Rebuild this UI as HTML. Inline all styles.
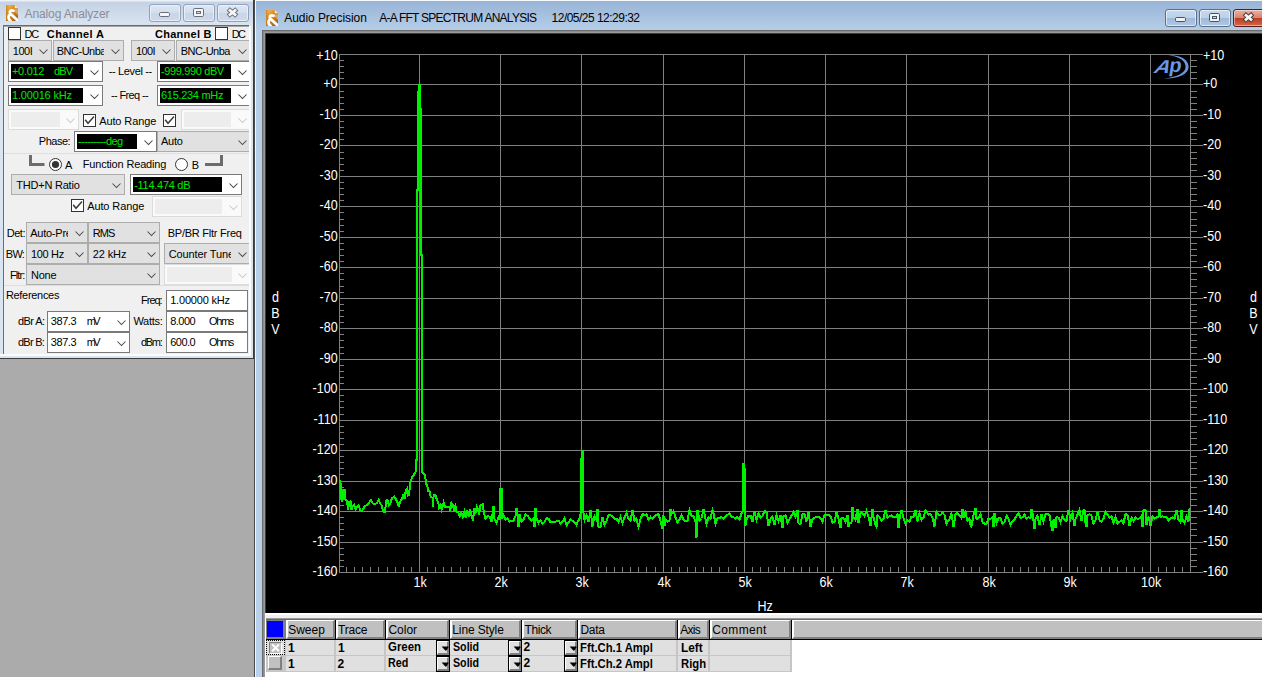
<!DOCTYPE html>
<html lang="en"><head><meta charset="utf-8"><title>Audio Precision</title>
<style>
html,body{margin:0;padding:0;}
body{width:1262px;height:677px;overflow:hidden;background:#ababab;position:relative;font-family:"Liberation Sans",sans-serif;}
div{position:absolute;box-sizing:border-box;white-space:pre;}
.t{font-size:11px;line-height:13px;color:#000;transform:scaleY(1.06);transform-origin:0 10px;}
.tb{font-size:11px;line-height:13px;color:#000;font-weight:bold;transform:scaleY(1.06);transform-origin:0 10px;}
.g{font-size:11px;line-height:13px;color:#00e800;transform:scaleY(1.06);transform-origin:0 10px;}
.cb{background:#e1e1e1;border:1px solid #adadad;}
.cbd{background:#fafafa;border:1px solid #dcdcdc;}
.wb{background:#fff;border:1px solid #7a7a7a;}
.blk{background:#000;}
.chk{background:#fff;border:1px solid #333;}
.hd{background:#c0c0c0;border-top:1px solid #fff;border-left:2px solid #fff;border-right:2px solid #808080;border-bottom:2px solid #808080;}
svg{position:absolute;overflow:visible;}
</style></head>
<body>
<div style="left:254px;top:0px;width:1px;height:677px;background:#4a4a4a;"></div>
<div style="left:255px;top:0px;width:1010px;height:677px;background:#f4f7fb;"></div>
<div style="left:256px;top:1px;width:1010px;height:680px;background:linear-gradient(#98b4d6,#b6cee8 30px,#b9d1ea);"></div>
<svg width="12" height="16" viewBox="0 0 12 16" style="left:266px;top:10px;overflow:hidden"><defs><linearGradient id="ig266" x1="0" y1="0" x2="0.9" y2="1"><stop offset="0" stop-color="#f8c55c"/><stop offset=".35" stop-color="#e0962e"/><stop offset="1" stop-color="#a55a10"/></linearGradient><linearGradient id="ih266" x1="0" y1="0" x2="1" y2="0"><stop offset="0" stop-color="#b8680f"/><stop offset="1" stop-color="#b8680f" stop-opacity="0"/></linearGradient></defs><path d="M0 0 H8.8 L12 3.2 V16 H0 Z" fill="url(#ig266)"/><path d="M0 0 H3 V16 H0 Z" fill="url(#ih266)" opacity=".6"/><path d="M6.5 4.5 H12 V10 Z" fill="#f4cf8e" opacity=".55"/><path d="M8.8 0 L12 3.2 H9.4 Q8.8 3.2 8.8 2.4 Z" fill="#fbeed2"/><path d="M7.4 5.8 C5 4.8 3.2 6.2 4.2 8.4 L11.6 15.4 M4.2 9.2 C1.8 10.6 2 14 4.4 15.6" fill="none" stroke="#fff" stroke-width="2.8" stroke-linecap="round"/></svg>
<div class="t" style="left:284.2px;top:11px;letter-spacing:-0.05px;font-size:12px;line-height:14px;color:#000;">Audio Precision</div>
<div class="t" style="left:379.2px;top:11px;letter-spacing:-0.74px;font-size:12px;line-height:14px;color:#000;">A-A FFT SPECTRUM ANALYSIS</div>
<div class="t" style="left:551.6px;top:11px;letter-spacing:-0.52px;font-size:12px;line-height:14px;color:#000;">12/05/25 12:29:32</div>
<div style="left:1165px;top:9px;width:32px;height:18px;border:1px solid #5d6f88;border-radius:3px;background:linear-gradient(#c5d8ee,#bcd1ea 48%,#9fb9d9 52%,#b0c8e4);box-shadow:inset 0 0 0 1px rgba(255,255,255,.6);"></div>
<svg width="32" height="18" style="left:1165px;top:8.5px"><rect x="10.5" y="8.5" width="10" height="4" rx="1.2" fill="#f2f2f2" stroke="#4a5363"/></svg>
<div style="left:1199px;top:9px;width:32px;height:18px;border:1px solid #5d6f88;border-radius:3px;background:linear-gradient(#c5d8ee,#bcd1ea 48%,#9fb9d9 52%,#b0c8e4);box-shadow:inset 0 0 0 1px rgba(255,255,255,.6);"></div>
<svg width="32" height="18" style="left:1199px;top:8.5px"><rect x="10.5" y="4.5" width="10" height="8" rx="1.2" fill="#f2f2f2" stroke="#4a5363"/><rect x="13.5" y="7.5" width="4" height="2" fill="#cfdbea" stroke="#4a5363"/></svg>
<div style="left:1233px;top:9px;width:40px;height:18px;border:1px solid #5b1a1a;border-radius:3px;background:linear-gradient(#eab0a2,#dc8270 48%,#c13a1f 52%,#cf6a4a);box-shadow:inset 0 0 0 1px rgba(255,255,255,.45);"></div>
<svg width="14" height="12" style="left:1242px;top:11px"><path d="M4 4.3 L9 8.5 M9 4.3 L4 8.5" stroke="#4a3c3c" stroke-width="4.6" stroke-linecap="square"/><path d="M4 4.3 L9 8.5 M9 4.3 L4 8.5" stroke="#f6f6f6" stroke-width="2.7" stroke-linecap="square"/></svg>
<div style="left:262px;top:30px;width:1004px;height:650px;background:#6a6a6a;"></div>
<div style="left:263px;top:31px;width:1004px;height:650px;background:#8c8c8c;"></div>
<div style="left:264px;top:32px;width:1004px;height:650px;background:#9a9a9a;"></div>
<div style="left:265px;top:33px;width:1004px;height:650px;background:#3c3c3c;"></div>
<div style="left:266px;top:34px;width:1000px;height:579px;background:#000;"></div>
<div style="left:265px;top:613px;width:1001px;height:70px;background:#fff;"></div>
<div style="left:265px;top:615px;width:1001px;height:3px;background:#f0f0f0;"></div>
<svg width="1262" height="677" viewBox="0 0 1262 677" style="left:0;top:0" font-family="Liberation Sans, sans-serif" font-size="13"><g stroke="#808080" stroke-width="1" shape-rendering="crispEdges" fill="none"><path d="M339 54.5 H1203"/><path d="M339 84.5 H1203"/><path d="M339 115.5 H1203"/><path d="M339 145.5 H1203"/><path d="M339 176.5 H1203"/><path d="M339 206.5 H1203"/><path d="M339 237.5 H1203"/><path d="M339 267.5 H1203"/><path d="M339 298.5 H1203"/><path d="M339 328.5 H1203"/><path d="M339 359.5 H1203"/><path d="M339 389.5 H1203"/><path d="M339 420.5 H1203"/><path d="M339 450.5 H1203"/><path d="M339 481.5 H1203"/><path d="M339 511.5 H1203"/><path d="M339 542.5 H1203"/><path d="M339 572.5 H1203"/><path d="M339.5 54 V573"/><path d="M1190.5 54 V573"/><path d="M419.5 54 V573"/><path d="M500.5 54 V573"/><path d="M581.5 54 V573"/><path d="M663.5 54 V573"/><path d="M744.5 54 V573"/><path d="M825.5 54 V573"/><path d="M906.5 54 V573"/><path d="M988.5 54 V573"/><path d="M1069.5 54 V573"/><path d="M1150.5 54 V573"/><path d="M339 60.5 h5 M1190 60.5 h7 M339 66.5 h5 M1190 66.5 h7 M339 72.5 h5 M1190 72.5 h7 M339 78.5 h5 M1190 78.5 h7 M339 91.5 h5 M1190 91.5 h7 M339 97.5 h5 M1190 97.5 h7 M339 103.5 h5 M1190 103.5 h7 M339 109.5 h5 M1190 109.5 h7 M339 121.5 h5 M1190 121.5 h7 M339 127.5 h5 M1190 127.5 h7 M339 133.5 h5 M1190 133.5 h7 M339 139.5 h5 M1190 139.5 h7 M339 152.5 h5 M1190 152.5 h7 M339 158.5 h5 M1190 158.5 h7 M339 164.5 h5 M1190 164.5 h7 M339 170.5 h5 M1190 170.5 h7 M339 182.5 h5 M1190 182.5 h7 M339 188.5 h5 M1190 188.5 h7 M339 194.5 h5 M1190 194.5 h7 M339 200.5 h5 M1190 200.5 h7 M339 212.5 h5 M1190 212.5 h7 M339 219.5 h5 M1190 219.5 h7 M339 225.5 h5 M1190 225.5 h7 M339 231.5 h5 M1190 231.5 h7 M339 243.5 h5 M1190 243.5 h7 M339 249.5 h5 M1190 249.5 h7 M339 255.5 h5 M1190 255.5 h7 M339 261.5 h5 M1190 261.5 h7 M339 273.5 h5 M1190 273.5 h7 M339 279.5 h5 M1190 279.5 h7 M339 286.5 h5 M1190 286.5 h7 M339 292.5 h5 M1190 292.5 h7 M339 304.5 h5 M1190 304.5 h7 M339 310.5 h5 M1190 310.5 h7 M339 316.5 h5 M1190 316.5 h7 M339 322.5 h5 M1190 322.5 h7 M339 334.5 h5 M1190 334.5 h7 M339 340.5 h5 M1190 340.5 h7 M339 347.5 h5 M1190 347.5 h7 M339 353.5 h5 M1190 353.5 h7 M339 365.5 h5 M1190 365.5 h7 M339 371.5 h5 M1190 371.5 h7 M339 377.5 h5 M1190 377.5 h7 M339 383.5 h5 M1190 383.5 h7 M339 395.5 h5 M1190 395.5 h7 M339 401.5 h5 M1190 401.5 h7 M339 407.5 h5 M1190 407.5 h7 M339 414.5 h5 M1190 414.5 h7 M339 426.5 h5 M1190 426.5 h7 M339 432.5 h5 M1190 432.5 h7 M339 438.5 h5 M1190 438.5 h7 M339 444.5 h5 M1190 444.5 h7 M339 456.5 h5 M1190 456.5 h7 M339 462.5 h5 M1190 462.5 h7 M339 468.5 h5 M1190 468.5 h7 M339 474.5 h5 M1190 474.5 h7 M339 487.5 h5 M1190 487.5 h7 M339 493.5 h5 M1190 493.5 h7 M339 499.5 h5 M1190 499.5 h7 M339 505.5 h5 M1190 505.5 h7 M339 517.5 h5 M1190 517.5 h7 M339 523.5 h5 M1190 523.5 h7 M339 529.5 h5 M1190 529.5 h7 M339 535.5 h5 M1190 535.5 h7 M339 548.5 h5 M1190 548.5 h7 M339 554.5 h5 M1190 554.5 h7 M339 560.5 h5 M1190 560.5 h7 M339 566.5 h5 M1190 566.5 h7"/><path d="M346.5 567 v6 M354.5 567 v6 M362.5 567 v6 M370.5 567 v6 M378.5 567 v6 M387.5 567 v6 M395.5 567 v6 M403.5 567 v6 M411.5 567 v6 M427.5 567 v6 M435.5 567 v6 M443.5 567 v6 M451.5 567 v6 M460.5 567 v6 M468.5 567 v6 M476.5 567 v6 M484.5 567 v6 M492.5 567 v6 M508.5 567 v6 M516.5 567 v6 M525.5 567 v6 M533.5 567 v6 M541.5 567 v6 M549.5 567 v6 M557.5 567 v6 M565.5 567 v6 M573.5 567 v6 M590.5 567 v6 M598.5 567 v6 M606.5 567 v6 M614.5 567 v6 M622.5 567 v6 M630.5 567 v6 M638.5 567 v6 M646.5 567 v6 M655.5 567 v6 M671.5 567 v6 M679.5 567 v6 M687.5 567 v6 M695.5 567 v6 M703.5 567 v6 M711.5 567 v6 M719.5 567 v6 M728.5 567 v6 M736.5 567 v6 M752.5 567 v6 M760.5 567 v6 M768.5 567 v6 M776.5 567 v6 M784.5 567 v6 M793.5 567 v6 M801.5 567 v6 M809.5 567 v6 M817.5 567 v6 M833.5 567 v6 M841.5 567 v6 M849.5 567 v6 M858.5 567 v6 M866.5 567 v6 M874.5 567 v6 M882.5 567 v6 M890.5 567 v6 M898.5 567 v6 M914.5 567 v6 M923.5 567 v6 M931.5 567 v6 M939.5 567 v6 M947.5 567 v6 M955.5 567 v6 M963.5 567 v6 M971.5 567 v6 M979.5 567 v6 M996.5 567 v6 M1004.5 567 v6 M1012.5 567 v6 M1020.5 567 v6 M1028.5 567 v6 M1036.5 567 v6 M1044.5 567 v6 M1052.5 567 v6 M1061.5 567 v6 M1077.5 567 v6 M1085.5 567 v6 M1093.5 567 v6 M1101.5 567 v6 M1109.5 567 v6 M1117.5 567 v6 M1126.5 567 v6 M1134.5 567 v6 M1142.5 567 v6 M1158.5 567 v6 M1166.5 567 v6 M1174.5 567 v6 M1182.5 567 v6"/></g><g fill="#fff"><text transform="translate(337.6,60) scale(.965,1.08)" text-anchor="end">+10</text><text transform="translate(1203,60) scale(.965,1.08)">+10</text><text transform="translate(337.6,88) scale(.965,1.08)" text-anchor="end">+0</text><text transform="translate(1203,88) scale(.965,1.08)">+0</text><text transform="translate(337.6,119) scale(.965,1.08)" text-anchor="end">-10</text><text transform="translate(1203,119) scale(.965,1.08)">-10</text><text transform="translate(337.6,149) scale(.965,1.08)" text-anchor="end">-20</text><text transform="translate(1203,149) scale(.965,1.08)">-20</text><text transform="translate(337.6,180) scale(.965,1.08)" text-anchor="end">-30</text><text transform="translate(1203,180) scale(.965,1.08)">-30</text><text transform="translate(337.6,210) scale(.965,1.08)" text-anchor="end">-40</text><text transform="translate(1203,210) scale(.965,1.08)">-40</text><text transform="translate(337.6,241) scale(.965,1.08)" text-anchor="end">-50</text><text transform="translate(1203,241) scale(.965,1.08)">-50</text><text transform="translate(337.6,271) scale(.965,1.08)" text-anchor="end">-60</text><text transform="translate(1203,271) scale(.965,1.08)">-60</text><text transform="translate(337.6,302) scale(.965,1.08)" text-anchor="end">-70</text><text transform="translate(1203,302) scale(.965,1.08)">-70</text><text transform="translate(337.6,332) scale(.965,1.08)" text-anchor="end">-80</text><text transform="translate(1203,332) scale(.965,1.08)">-80</text><text transform="translate(337.6,363) scale(.965,1.08)" text-anchor="end">-90</text><text transform="translate(1203,363) scale(.965,1.08)">-90</text><text transform="translate(337.6,393) scale(.965,1.08)" text-anchor="end">-100</text><text transform="translate(1203,393) scale(.965,1.08)">-100</text><text transform="translate(337.6,424) scale(.965,1.08)" text-anchor="end">-110</text><text transform="translate(1203,424) scale(.965,1.08)">-110</text><text transform="translate(337.6,454) scale(.965,1.08)" text-anchor="end">-120</text><text transform="translate(1203,454) scale(.965,1.08)">-120</text><text transform="translate(337.6,485) scale(.965,1.08)" text-anchor="end">-130</text><text transform="translate(1203,485) scale(.965,1.08)">-130</text><text transform="translate(337.6,515) scale(.965,1.08)" text-anchor="end">-140</text><text transform="translate(1203,515) scale(.965,1.08)">-140</text><text transform="translate(337.6,546) scale(.965,1.08)" text-anchor="end">-150</text><text transform="translate(1203,546) scale(.965,1.08)">-150</text><text transform="translate(337.6,576) scale(.965,1.08)" text-anchor="end">-160</text><text transform="translate(1203,576) scale(.965,1.08)">-160</text><text transform="translate(420.1,587) scale(.965,1.08)" text-anchor="middle">1k</text><text transform="translate(501.1,587) scale(.965,1.08)" text-anchor="middle">2k</text><text transform="translate(582.1,587) scale(.965,1.08)" text-anchor="middle">3k</text><text transform="translate(664.1,587) scale(.965,1.08)" text-anchor="middle">4k</text><text transform="translate(745.1,587) scale(.965,1.08)" text-anchor="middle">5k</text><text transform="translate(826.1,587) scale(.965,1.08)" text-anchor="middle">6k</text><text transform="translate(907.1,587) scale(.965,1.08)" text-anchor="middle">7k</text><text transform="translate(989.1,587) scale(.965,1.08)" text-anchor="middle">8k</text><text transform="translate(1070.1,587) scale(.965,1.08)" text-anchor="middle">9k</text><text transform="translate(1151.1,587) scale(.965,1.08)" text-anchor="middle">10k</text><text transform="translate(765.2,611) scale(.965,1.08)" text-anchor="middle">Hz</text><text transform="translate(275.5,302) scale(.965,1.08)" text-anchor="middle">d</text><text transform="translate(1253.5,302) scale(.965,1.08)" text-anchor="middle">d</text><text transform="translate(275.5,318) scale(.965,1.08)" text-anchor="middle">B</text><text transform="translate(1253.5,318) scale(.965,1.08)" text-anchor="middle">B</text><text transform="translate(275.5,334) scale(.965,1.08)" text-anchor="middle">V</text><text transform="translate(1253.5,334) scale(.965,1.08)" text-anchor="middle">V</text></g><g fill="#6a98e2" font-weight="bold"><text transform="translate(1152.4,72.9) skewX(-27) scale(1.16,1)" font-size="18.7">A</text><text transform="translate(1168.6,72.3) skewX(-9)" font-size="20">p</text><path d="M1168 55 C1182 55 1188.6 60 1188.6 67 C1188.6 74 1178 79.2 1164 78.4 C1176 77.6 1185.6 73 1185.6 67 C1185.6 61 1180 56.6 1168 55 Z"/></g><path d="M339.87 479.9 L340.91 484.3 L341.65 502 L342.68 488.7 L343.57 499.1 L344.6 488.7 L345.34 499.1 L346.82 500.6 L348.29 509.4 L349.03 502 L350.51 501.3 L351.54 510.2 L352.73 506.5 L354.2 505 L355.68 509.4 L357.16 507.2 L358.63 505.7 L360.41 510.2 L361.88 511.2 L364.54 506.5 L366.76 505 L368.97 502.8 L370.89 499.8 L372.67 503.5 L374.88 504.3 L377.1 502.8 L378.57 499.8 L380.05 503.5 L381.53 505 L383.01 511.6 L385.22 512.1 L385.96 500.6 L387.44 499.8 L388.91 505 L390.39 503.5 L391.87 498.3 L394.08 496.6 L395.86 499.1 L397.78 502.8 L398.81 507.2 L399.99 502 L402.21 498.3 L403.24 493.9 L404.42 499.1 L405.9 490.2 L406.94 488.7 L407.67 495.4 L409.15 494.7 L410.04 482.8 L411.07 479.9 L412.55 476.2 L414.03 474.7 L415.5 471.8 L415.6 472 L415.6 460 L417 460 L417 190 L418 190 L418 92 L419 92 L419 85 L420 85 L420 109 L421 109 L421 255 L422 255 L422 472 L424.36 474 L425.4 476.9 L425.84 483.6 L427.32 485.8 L428.06 491 L429.83 491.7 L430.72 496.9 L432.49 497.6 L432.93 506.5 L433.67 494.7 L435.44 495.4 L436.92 499.8 L438.4 503.5 L439.14 507.9 L440.61 505 L441.65 509.4 L443.57 502.8 L445.04 507.2 L447.26 506.5 L449.48 507.2 L450.21 510.9 L451.4 502.8 L452.87 505 L453.91 509.4 L455.38 505.7 L456.42 511.6 L458.34 512.4 L459.82 516.1 L461.29 513.1 L462.77 516.8 L464.25 511.6 L465.72 517.5 L467.2 510.2 L468.68 516.8 L470.16 509.4 L471.63 516.1 L473.11 520.5 L474.14 507.9 L475.32 513.9 L476.8 506.5 L478.28 509.4 L479.02 514.6 L480.49 505.7 L482.71 504.3 L484.19 513.9 L485.5 518.4 L487.5 516 L489.5 516.6 L491.5 521.8 L493.5 506 L494.5 519.3 L496.5 522.8 L498.5 517.6 L499.5 519.7 L499.5 519 L499.5 489 L501.5 489 L501.5 491 L502 491 L502 519 L503.5 515.1 L505.5 519.9 L507.5 518.5 L509.5 521.6 L511.5 520.5 L513.5 520.5 L515.5 515.8 L516.5 508 L517.5 516.1 L518.5 527 L519.5 514.2 L521.5 521.4 L523.5 520 L525.5 514.6 L527.5 515.8 L529.5 518.5 L531.5 520.6 L533.5 518.6 L534.5 527 L535.5 508 L536.5 518.1 L538.5 523 L540.5 520.5 L542.5 523.7 L544.5 522 L546.5 518.4 L548.5 518.6 L550.5 522.3 L552.5 522 L554.5 521.7 L556.5 521.5 L558.5 520.7 L560.5 523.5 L562.5 521.6 L564.5 518.2 L566.5 525.2 L568.5 522.7 L570.5 519.2 L572.5 520.8 L574.5 522 L576.5 525 L577.5 522.2 L579.5 518.7 L580.5 514.4 L581 512 L581 459 L581.5 459 L581.5 451 L582.5 451 L582.5 493 L583.4 493 L583.4 512 L584.5 520.2 L586.5 515.6 L588.5 521.7 L590.5 510 L592.5 526.5 L594.5 516.4 L596.5 520.1 L597.5 509 L598.5 526.5 L600.5 526.5 L602.5 517.2 L604.5 525 L606.5 521 L608.5 515 L610.5 515.2 L612.5 516.6 L614.5 519 L616.5 518.7 L618.5 521.9 L620.5 517.1 L622.5 523.1 L624.5 517.6 L626.5 513 L628.5 518.8 L630.5 520.9 L632.5 510 L634.5 520.7 L636.5 518.8 L638.5 526.5 L640.5 519 L642.5 513.9 L644.5 514.9 L646.5 514.5 L648.5 519.6 L650.5 516.9 L652.5 519 L654.5 516.5 L656.5 514.9 L658.5 514 L660.5 520.7 L662.5 529 L663.5 515.5 L664.5 526 L665.5 519.9 L667.5 521.9 L669.5 520.7 L670.5 509 L671.5 513.9 L673.5 510.9 L675.5 517.5 L677.5 522.3 L679.5 519.4 L681.5 515.2 L683.5 519.5 L685.5 521.3 L687.5 520.8 L689.5 510 L691.5 515.9 L693.5 516 L695.5 521.9 L696.5 538 L697.5 510 L699.5 520.6 L701.5 518.5 L703.5 509 L704.5 513.9 L706.5 523.5 L708.5 517.4 L710.5 518.6 L712.5 510 L713.5 513 L715.5 523.8 L717.5 518.1 L719.5 517.9 L721.5 517 L723.5 518.7 L725.5 516.1 L727.5 514.8 L729.5 513.6 L731.5 516.5 L733.5 517.3 L735.5 518.4 L737.5 517 L739.5 519.6 L741.5 513.2 L742.5 512.3 L742.6 512 L742.6 464 L744 464 L744 469 L745.2 469 L745.2 526 L746.5 519.9 L748.5 515.5 L750.5 515.5 L752.5 521.8 L754.5 511.1 L756.5 520 L758.5 513.2 L760.5 517.4 L762.5 516.2 L764.5 510.9 L766.5 512.3 L768.5 525.9 L770.5 518.9 L772.5 516.7 L774.5 525.1 L776.5 515.2 L778.5 520.9 L780.5 515.1 L782.5 528 L783.5 516.1 L785.5 515.4 L787.5 522.9 L789.5 519.2 L791.5 515.5 L793.5 512.2 L795.5 516.9 L797.5 510 L798.5 523.4 L800.5 524.3 L802.5 513.8 L804.5 514.1 L806.5 521.4 L808.5 512 L810.5 526.5 L812.5 519.1 L814.5 517.9 L816.5 516.8 L818.5 517.1 L820.5 517.9 L822.5 521.5 L824.5 514.8 L826.5 515.4 L828.5 515.1 L830.5 516 L832.5 522.6 L834.5 521.8 L836.5 511.8 L838.5 518.9 L840.5 528 L841.5 518.1 L843.5 518 L845.5 521.5 L847.5 515.2 L848.5 527 L849.5 522.7 L851.5 522.7 L852.5 507 L853.5 517.2 L855.5 520.1 L857.5 509 L858.5 522.8 L860.5 513.2 L862.5 513.5 L864.5 516.1 L866.5 511 L868.5 516.8 L870.5 525.9 L872.5 509 L873.5 517.4 L875.5 525 L876.5 527 L877.5 515.3 L879.5 516.9 L881.5 520.9 L883.5 518.5 L885.5 510 L887.5 517.6 L889.5 516.2 L891.5 515.3 L893.5 517.4 L895.5 517.3 L897.5 514.4 L898.5 528 L899.5 518.9 L901.5 510 L903.5 517.8 L905.5 524.2 L907.5 520.1 L909.5 521.8 L911.5 516.6 L913.5 516.7 L915.5 510 L917.5 521.3 L919.5 513.5 L921.5 520 L923.5 517.6 L925.5 510 L926.5 510.9 L928.5 514.7 L930.5 514.1 L932.5 517.9 L934.5 526.5 L936.5 511.5 L938.5 514.9 L940.5 515.1 L942.5 512.8 L944.5 515 L946.5 524 L947.5 521.7 L949.5 519.1 L951.5 513.7 L953.5 526.5 L955.5 514.6 L957.5 512.9 L959.5 515.6 L961.5 518 L962.5 509 L963.5 517.7 L965.5 512.5 L967.5 520.9 L969.5 518.5 L970.5 525 L971.5 526.1 L973.5 515.2 L975.5 508 L976.5 519.2 L978.5 517.8 L980.5 513.9 L982.5 522.3 L984.5 523.7 L986.5 524.1 L988.5 518.6 L990.5 518.7 L992.5 517.5 L993.5 527 L994.5 513.1 L996.5 523.1 L998.5 517.9 L1000.5 518.5 L1002.5 523.8 L1004.5 522.1 L1006.5 515.8 L1008.5 518.7 L1010.5 524.6 L1012.5 521.3 L1014.5 519.3 L1016.5 516 L1018.5 513 L1020.5 518.1 L1022.5 517.3 L1024.5 514.7 L1026.5 519.1 L1028.5 517.1 L1030.5 518.3 L1031.5 509 L1032.5 513.5 L1034.5 529 L1035.5 518.7 L1037.5 515.7 L1039.5 525.3 L1041.5 514.5 L1043.5 521.4 L1045.5 513.7 L1047.5 514.2 L1049.5 514.8 L1051.5 526.5 L1052.5 531 L1053.5 519.6 L1055.5 528 L1056.5 517.1 L1058.5 517.6 L1060.5 522.2 L1062.5 516 L1064.5 520.2 L1066.5 520.9 L1068.5 510.1 L1070.5 518.9 L1072.5 513.4 L1074.5 526 L1075.5 519.1 L1077.5 514.6 L1079.5 510 L1081.5 520.7 L1083.5 510 L1084.5 510 L1085.5 522.5 L1086.5 527 L1087.5 515.5 L1089.5 514.1 L1091.5 515.8 L1093.5 523.4 L1095.5 520.1 L1097.5 512.3 L1099.5 520.2 L1101.5 522 L1103.5 518.5 L1105.5 512 L1107.5 514.5 L1109.5 517.4 L1111.5 516.4 L1113.5 522.5 L1115.5 517.1 L1117.5 523.7 L1119.5 521.8 L1121.5 520.4 L1123.5 523.2 L1125.5 514 L1127.5 514.9 L1129.5 525.5 L1131.5 517.7 L1133.5 521.2 L1135.5 517.5 L1137.5 518.8 L1139.5 518.4 L1141.5 515.9 L1142.5 527 L1143.5 510 L1145.5 510 L1146.5 524.9 L1148.5 516.7 L1150.5 525.6 L1152.5 516.5 L1154.5 519 L1156.5 517.3 L1158.5 517.4 L1159.5 509 L1160.5 517.1 L1162.5 516.3 L1164.5 516.9 L1166.5 516.9 L1168.5 520.3 L1170.5 518.6 L1172.5 517.3 L1174.5 518.9 L1176.5 510 L1178.5 519.4 L1180.5 522 L1181.5 510 L1182.5 519.5 L1184.5 522.9 L1186.5 516.6 L1188.5 521.4 L1189.5 509 L1190 509" fill="none" stroke="#00f000" stroke-width="2" stroke-linejoin="miter" shape-rendering="crispEdges"/></svg>
<div style="left:266px;top:618px;width:1000px;height:1px;background:#9a9a9a;"></div>
<div style="left:266px;top:619px;width:1000px;height:21px;background:#000;"></div>
<div style="left:266px;top:619px;width:1000px;height:1px;background:#6a6a6a;"></div>
<div style="left:266px;top:620px;width:20px;height:19px;background:#808080;"></div>
<div style="left:267px;top:621px;width:16px;height:16px;background:#0000ff;"></div>
<div class="hd" style="left:286px;top:620px;width:49px;height:19px;"></div>
<div class="t" style="left:288.2px;top:623px;letter-spacing:0.0px;font-size:12px;line-height:14px;">Sweep</div>
<div class="hd" style="left:336px;top:620px;width:49px;height:19px;"></div>
<div class="t" style="left:338.1px;top:623px;letter-spacing:-0.2px;font-size:12px;line-height:14px;">Trace</div>
<div class="hd" style="left:386px;top:620px;width:63px;height:19px;"></div>
<div class="t" style="left:388.4px;top:623px;letter-spacing:0.0px;font-size:12px;line-height:14px;">Color</div>
<div class="hd" style="left:450px;top:620px;width:71px;height:19px;"></div>
<div class="t" style="left:452.3px;top:623px;letter-spacing:-0.13px;font-size:12px;line-height:14px;">Line Style</div>
<div class="hd" style="left:522px;top:620px;width:55px;height:19px;"></div>
<div class="t" style="left:524.6px;top:623px;letter-spacing:-0.45px;font-size:12px;line-height:14px;">Thick</div>
<div class="hd" style="left:578px;top:620px;width:99px;height:19px;"></div>
<div class="t" style="left:580.4px;top:623px;letter-spacing:-0.27px;font-size:12px;line-height:14px;">Data</div>
<div class="hd" style="left:678px;top:620px;width:31px;height:19px;"></div>
<div class="t" style="left:680.2px;top:623px;letter-spacing:-0.7px;font-size:12px;line-height:14px;">Axis</div>
<div class="hd" style="left:710px;top:620px;width:81px;height:19px;"></div>
<div class="t" style="left:712.2px;top:623px;letter-spacing:0.37px;font-size:12px;line-height:14px;">Comment</div>
<div class="hd" style="left:792px;top:620px;width:478px;height:19px;"></div>
<div style="left:266px;top:640px;width:526px;height:32px;background:#c6c6c6;"></div>
<div style="left:266px;top:640px;width:19px;height:15px;background:#e0e0e0;"></div>
<div style="left:286px;top:640px;width:48px;height:15px;background:#e0e0e0;"></div>
<div style="left:336px;top:640px;width:48px;height:15px;background:#e0e0e0;"></div>
<div style="left:386px;top:640px;width:62px;height:15px;background:#e0e0e0;"></div>
<div style="left:450px;top:640px;width:70px;height:15px;background:#e0e0e0;"></div>
<div style="left:522px;top:640px;width:54px;height:15px;background:#e0e0e0;"></div>
<div style="left:578px;top:640px;width:98px;height:15px;background:#e0e0e0;"></div>
<div style="left:678px;top:640px;width:30px;height:15px;background:#e0e0e0;"></div>
<div style="left:710px;top:640px;width:80px;height:15px;background:#e0e0e0;"></div>
<div class="t" style="left:288.0px;top:641px;font-size:12px;line-height:14px;font-weight:bold;">1</div>
<div class="t" style="left:337.9px;top:641px;font-size:12px;line-height:14px;font-weight:bold;">1</div>
<div class="t" style="left:388.1px;top:640px;transform:scaleX(0.9514);transform-origin:0 0;font-size:12px;line-height:14px;font-weight:bold;">Green</div>
<div class="t" style="left:453.3px;top:640px;transform:scaleX(0.8897);transform-origin:0 0;font-size:12px;line-height:14px;font-weight:bold;">Solid</div>
<div class="t" style="left:523.5px;top:640px;font-size:12px;line-height:14px;font-weight:bold;">2</div>
<div class="t" style="left:580.4px;top:641px;transform:scaleX(0.9397);transform-origin:0 0;font-size:12px;line-height:14px;font-weight:bold;">Fft.Ch.1 Ampl</div>
<div class="t" style="left:680.5px;top:641px;transform:scaleX(0.9864);transform-origin:0 0;font-size:12px;line-height:14px;font-weight:bold;">Left</div>
<div style="left:436px;top:640px;width:14px;height:16px;background:#e0e0e0;border:1px solid #000;"><div style="left:0;top:0;width:12px;height:14px;border-top:1px solid #fff;border-left:1px solid #fff;border-right:2px solid #808080;border-bottom:2px solid #808080"></div><svg width="12" height="14" style="left:0;top:0"><path d="M4.6 5.6 H11.4 V6.6 L9.2 9.8 H8.6 Z" fill="#000"/></svg></div>
<div style="left:508px;top:640px;width:14px;height:16px;background:#e0e0e0;border:1px solid #000;"><div style="left:0;top:0;width:12px;height:14px;border-top:1px solid #fff;border-left:1px solid #fff;border-right:2px solid #808080;border-bottom:2px solid #808080"></div><svg width="12" height="14" style="left:0;top:0"><path d="M4.6 5.6 H11.4 V6.6 L9.2 9.8 H8.6 Z" fill="#000"/></svg></div>
<div style="left:564px;top:640px;width:14px;height:16px;background:#e0e0e0;border:1px solid #000;"><div style="left:0;top:0;width:12px;height:14px;border-top:1px solid #fff;border-left:1px solid #fff;border-right:2px solid #808080;border-bottom:2px solid #808080"></div><svg width="12" height="14" style="left:0;top:0"><path d="M4.6 5.6 H11.4 V6.6 L9.2 9.8 H8.6 Z" fill="#000"/></svg></div>
<div style="left:266px;top:656px;width:19px;height:15px;background:#c6c6c6;"></div>
<div style="left:286px;top:656px;width:48px;height:15px;background:#e0e0e0;"></div>
<div style="left:336px;top:656px;width:48px;height:15px;background:#e0e0e0;"></div>
<div style="left:386px;top:656px;width:62px;height:15px;background:#e0e0e0;"></div>
<div style="left:450px;top:656px;width:70px;height:15px;background:#e0e0e0;"></div>
<div style="left:522px;top:656px;width:54px;height:15px;background:#e0e0e0;"></div>
<div style="left:578px;top:656px;width:98px;height:15px;background:#e0e0e0;"></div>
<div style="left:678px;top:656px;width:30px;height:15px;background:#e0e0e0;"></div>
<div style="left:710px;top:656px;width:80px;height:15px;background:#e0e0e0;"></div>
<div class="t" style="left:288.0px;top:657px;font-size:12px;line-height:14px;font-weight:bold;">1</div>
<div class="t" style="left:337.5px;top:657px;font-size:12px;line-height:14px;font-weight:bold;">2</div>
<div class="t" style="left:388.1px;top:656px;transform:scaleX(0.8957);transform-origin:0 0;font-size:12px;line-height:14px;font-weight:bold;">Red</div>
<div class="t" style="left:453.3px;top:656px;transform:scaleX(0.8897);transform-origin:0 0;font-size:12px;line-height:14px;font-weight:bold;">Solid</div>
<div class="t" style="left:523.5px;top:656px;font-size:12px;line-height:14px;font-weight:bold;">2</div>
<div class="t" style="left:580.4px;top:657px;transform:scaleX(0.9397);transform-origin:0 0;font-size:12px;line-height:14px;font-weight:bold;">Fft.Ch.2 Ampl</div>
<div style="left:0;top:0;width:705.7px;height:677px;overflow:hidden"><div class="t" style="left:680.5px;top:657px;transform:scaleX(0.9387);transform-origin:0 0;font-size:12px;line-height:14px;font-weight:bold;">Right</div></div>
<div style="left:436px;top:656px;width:14px;height:16px;background:#e0e0e0;border:1px solid #000;"><div style="left:0;top:0;width:12px;height:14px;border-top:1px solid #fff;border-left:1px solid #fff;border-right:2px solid #808080;border-bottom:2px solid #808080"></div><svg width="12" height="14" style="left:0;top:0"><path d="M4.6 5.6 H11.4 V6.6 L9.2 9.8 H8.6 Z" fill="#000"/></svg></div>
<div style="left:508px;top:656px;width:14px;height:16px;background:#e0e0e0;border:1px solid #000;"><div style="left:0;top:0;width:12px;height:14px;border-top:1px solid #fff;border-left:1px solid #fff;border-right:2px solid #808080;border-bottom:2px solid #808080"></div><svg width="12" height="14" style="left:0;top:0"><path d="M4.6 5.6 H11.4 V6.6 L9.2 9.8 H8.6 Z" fill="#000"/></svg></div>
<div style="left:564px;top:656px;width:14px;height:16px;background:#e0e0e0;border:1px solid #000;"><div style="left:0;top:0;width:12px;height:14px;border-top:1px solid #fff;border-left:1px solid #fff;border-right:2px solid #808080;border-bottom:2px solid #808080"></div><svg width="12" height="14" style="left:0;top:0"><path d="M4.6 5.6 H11.4 V6.6 L9.2 9.8 H8.6 Z" fill="#000"/></svg></div>
<div style="left:266px;top:640px;width:19px;height:15px;border:1px dotted #000;"></div>
<div style="left:269px;top:642px;width:13px;height:12px;background:#c0c0c0;border-top:1px solid #808080;border-left:1px solid #808080;border-right:1px solid #fff;border-bottom:1px solid #fff;"></div>
<svg width="13" height="12" style="left:269px;top:642px"><path d="M3.2 2.4 L10 9.2 M10 2.4 L3.2 9.2" stroke="#fff" stroke-width="2"/></svg>
<div style="left:268px;top:656px;width:14px;height:14px;background:#c0c0c0;border-top:1px solid #fff;border-left:1px solid #fff;border-right:2px solid #808080;border-bottom:2px solid #808080;"></div>
<div style="left:0px;top:0px;width:254px;height:359px;background:#3c3c3c;"></div>
<div style="left:0px;top:0px;width:253px;height:358px;background:linear-gradient(#edf1f7 0,#edf1f7 1px,#c3d2e4 2px,#d9e4f1 25px,#dae5f2);"></div>
<div style="left:249px;top:26px;width:2px;height:330px;background:#fafcfe;"></div>
<div style="left:0px;top:354px;width:251px;height:2px;background:#fafcfe;"></div>
<div style="left:3px;top:25px;width:246px;height:329px;background:#f0f0f0;border-top:1px solid #6a6a6a;border-left:1px solid #6e6e6e;box-shadow:inset 0 1px 0 #a6a6a6;"></div>
<svg width="12" height="16" viewBox="0 0 12 16" style="left:6px;top:5px;overflow:hidden"><defs><linearGradient id="ig6" x1="0" y1="0" x2="0.9" y2="1"><stop offset="0" stop-color="#f8c55c"/><stop offset=".35" stop-color="#e0962e"/><stop offset="1" stop-color="#a55a10"/></linearGradient><linearGradient id="ih6" x1="0" y1="0" x2="1" y2="0"><stop offset="0" stop-color="#b8680f"/><stop offset="1" stop-color="#b8680f" stop-opacity="0"/></linearGradient></defs><path d="M0 0 H8.8 L12 3.2 V16 H0 Z" fill="url(#ig6)"/><path d="M0 0 H3 V16 H0 Z" fill="url(#ih6)" opacity=".6"/><path d="M6.5 4.5 H12 V10 Z" fill="#f4cf8e" opacity=".55"/><path d="M8.8 0 L12 3.2 H9.4 Q8.8 3.2 8.8 2.4 Z" fill="#fbeed2"/><path d="M7.4 5.8 C5 4.8 3.2 6.2 4.2 8.4 L11.6 15.4 M4.2 9.2 C1.8 10.6 2 14 4.4 15.6" fill="none" stroke="#fff" stroke-width="2.8" stroke-linecap="round"/></svg>
<div class="t" style="left:24.6px;top:7px;letter-spacing:-0.13px;font-size:12px;line-height:14px;color:#8c8c97;">Analog Analyzer</div>
<div style="left:149px;top:4px;width:32px;height:18px;border:1px solid #93a1bc;border-radius:3px;background:linear-gradient(#dde6f2,#d3deed 50%,#c8d6e8 51%,#cedaea);box-shadow:inset 0 0 0 1px rgba(255,255,255,.5);"></div>
<svg width="32" height="18" style="left:149px;top:4px"><rect x="10.5" y="8.5" width="10" height="4" rx="1.2" fill="#f6f6f6" stroke="#6a6f7c"/></svg>
<div style="left:183px;top:4px;width:32px;height:18px;border:1px solid #93a1bc;border-radius:3px;background:linear-gradient(#dde6f2,#d3deed 50%,#c8d6e8 51%,#cedaea);box-shadow:inset 0 0 0 1px rgba(255,255,255,.5);"></div>
<svg width="32" height="18" style="left:183px;top:4px"><rect x="10.5" y="4.5" width="10" height="8" rx="1.2" fill="#f6f6f6" stroke="#6a6f7c"/><rect x="13.5" y="7.5" width="4" height="2" fill="#cfdbea" stroke="#6a6f7c"/></svg>
<div style="left:217px;top:4px;width:32px;height:18px;border:1px solid #93a1bc;border-radius:3px;background:linear-gradient(#dde6f2,#d3deed 50%,#c8d6e8 51%,#cedaea);box-shadow:inset 0 0 0 1px rgba(255,255,255,.5);"></div>
<svg width="32" height="18" style="left:217px;top:4px"><path d="M12.9 6.4 L18.1 10.6 M18.1 6.4 L12.9 10.6" stroke="#6a6f7c" stroke-width="4.6" stroke-linecap="square"/><path d="M12.9 6.4 L18.1 10.6 M18.1 6.4 L12.9 10.6" stroke="#f6f6f6" stroke-width="2.7" stroke-linecap="square"/></svg>
<div style="left:4px;top:26px;width:245px;height:328px;overflow:hidden"><div style="left:-4px;top:-26px;width:260px;height:360px">
<div class="chk" style="left:8px;top:27px;width:13px;height:13px;"></div>
<div class="t" style="left:24.6px;top:28px;letter-spacing:-1.3px;">DC</div>
<div class="tb" style="left:46.8px;top:28px;letter-spacing:0.4px;">Channel A</div>
<div class="tb" style="left:155.0px;top:28px;letter-spacing:0.27px;">Channel B</div>
<div class="chk" style="left:215px;top:27px;width:13px;height:13px;"></div>
<div class="t" style="left:231.7px;top:28px;letter-spacing:-1.7px;">DC</div>
<div class="cb" style="left:8px;top:40px;width:44px;height:21px;"></div>
<div class="t" style="left:12.8px;top:45px;letter-spacing:-0.47px;">100I</div>
<svg width="9" height="5" viewBox="0 0 9 5" style="left:39px;top:49px"><path d="M0.5 0.5 L4.5 4.5 L8.5 0.5" fill="none" stroke="#4a4a4a" stroke-width="1.05"/></svg>
<div class="cb" style="left:53px;top:40px;width:71px;height:21px;"></div>
<div style="left:53px;top:40px;width:51.0px;height:21px;overflow:hidden"><div class="t" style="left:3.8px;top:5px;letter-spacing:-0.51px;">BNC-Unba</div></div>
<svg width="9" height="5" viewBox="0 0 9 5" style="left:111px;top:49px"><path d="M0.5 0.5 L4.5 4.5 L8.5 0.5" fill="none" stroke="#4a4a4a" stroke-width="1.05"/></svg>
<div class="cb" style="left:131px;top:40px;width:44px;height:21px;"></div>
<div class="t" style="left:136.0px;top:45px;letter-spacing:-0.6px;">100I</div>
<svg width="9" height="5" viewBox="0 0 9 5" style="left:162px;top:49px"><path d="M0.5 0.5 L4.5 4.5 L8.5 0.5" fill="none" stroke="#4a4a4a" stroke-width="1.05"/></svg>
<div class="cb" style="left:176px;top:40px;width:80px;height:21px;"></div>
<div class="t" style="left:180.8px;top:45px;letter-spacing:-0.51px;">BNC-Unba</div>
<svg width="9" height="5" viewBox="0 0 9 5" style="left:238px;top:49px"><path d="M0.5 0.5 L4.5 4.5 L8.5 0.5" fill="none" stroke="#4a4a4a" stroke-width="1.05"/></svg>
<div class="wb" style="left:8px;top:61px;width:95px;height:21px;"></div>
<div class="blk" style="left:11px;top:64px;width:72px;height:15px;"></div>
<div class="g" style="left:12.0px;top:65px;letter-spacing:-0.3px;">+0.012</div>
<div class="g" style="left:54.0px;top:65px;letter-spacing:-0.8px;">dBV</div>
<svg width="9" height="5" viewBox="0 0 9 5" style="left:90px;top:70px"><path d="M0.5 0.5 L4.5 4.5 L8.5 0.5" fill="none" stroke="#404040" stroke-width="1.05"/></svg>
<div class="t" style="left:108.8px;top:65px;letter-spacing:-0.36px;">-- Level --</div>
<div class="wb" style="left:157px;top:61px;width:99px;height:21px;"></div>
<div class="blk" style="left:160px;top:64px;width:71px;height:15px;"></div>
<div class="g" style="left:161.0px;top:65px;letter-spacing:-0.37px;">-999.990 dBV</div>
<svg width="9" height="5" viewBox="0 0 9 5" style="left:238px;top:70px"><path d="M0.5 0.5 L4.5 4.5 L8.5 0.5" fill="none" stroke="#404040" stroke-width="1.05"/></svg>
<div class="wb" style="left:8px;top:85px;width:95px;height:21px;"></div>
<div class="blk" style="left:11px;top:88px;width:72px;height:15px;"></div>
<div class="g" style="left:12.0px;top:89px;letter-spacing:-0.17px;">1.00016 kHz</div>
<svg width="9" height="5" viewBox="0 0 9 5" style="left:90px;top:94px"><path d="M0.5 0.5 L4.5 4.5 L8.5 0.5" fill="none" stroke="#404040" stroke-width="1.05"/></svg>
<div class="t" style="left:111.0px;top:89px;letter-spacing:-0.64px;">-- Freq --</div>
<div class="wb" style="left:157px;top:85px;width:99px;height:21px;"></div>
<div class="blk" style="left:160px;top:88px;width:71px;height:15px;"></div>
<div class="g" style="left:161.0px;top:89px;letter-spacing:-0.3px;">615.234 mHz</div>
<svg width="9" height="5" viewBox="0 0 9 5" style="left:238px;top:94px"><path d="M0.5 0.5 L4.5 4.5 L8.5 0.5" fill="none" stroke="#404040" stroke-width="1.05"/></svg>
<div class="cbd" style="left:8px;top:109px;width:71px;height:21px;"></div>
<div style="left:11px;top:112px;width:49px;height:15px;background:#ededed;"></div>
<svg width="9" height="5" viewBox="0 0 9 5" style="left:66px;top:118px"><path d="M0.5 0.5 L4.5 4.5 L8.5 0.5" fill="none" stroke="#c8c8c8" stroke-width="1.05"/></svg>
<div class="chk" style="left:83px;top:114px;width:13px;height:13px;"></div>
<svg width="13" height="13" style="left:83px;top:114px"><path d="M2.2 5.8 L5 9.3 L11 2.6" fill="none" stroke="#3a3a3a" stroke-width="1.5"/></svg>
<div class="t" style="left:99.2px;top:115px;letter-spacing:-0.11px;">Auto Range</div>
<div class="chk" style="left:163px;top:114px;width:13px;height:13px;"></div>
<svg width="13" height="13" style="left:163px;top:114px"><path d="M2.2 5.8 L5 9.3 L11 2.6" fill="none" stroke="#3a3a3a" stroke-width="1.5"/></svg>
<div class="cbd" style="left:181px;top:109px;width:75px;height:21px;"></div>
<div style="left:184px;top:112px;width:47px;height:15px;background:#ededed;"></div>
<svg width="9" height="5" viewBox="0 0 9 5" style="left:238px;top:118px"><path d="M0.5 0.5 L4.5 4.5 L8.5 0.5" fill="none" stroke="#c8c8c8" stroke-width="1.05"/></svg>
<div class="t" style="left:38.8px;top:135px;letter-spacing:-0.48px;">Phase:</div>
<div class="wb" style="left:74px;top:131px;width:83px;height:21px;"></div>
<div class="blk" style="left:77px;top:134px;width:60px;height:15px;"></div>
<div class="g" style="left:78.0px;top:135px;letter-spacing:-0.56px;">---------deg</div>
<svg width="9" height="5" viewBox="0 0 9 5" style="left:144px;top:140px"><path d="M0.5 0.5 L4.5 4.5 L8.5 0.5" fill="none" stroke="#404040" stroke-width="1.05"/></svg>
<div class="cb" style="left:157px;top:131px;width:99px;height:21px;"></div>
<div class="t" style="left:161.0px;top:135px;letter-spacing:-0.27px;">Auto</div>
<svg width="9" height="5" viewBox="0 0 9 5" style="left:238px;top:140px"><path d="M0.5 0.5 L4.5 4.5 L8.5 0.5" fill="none" stroke="#4a4a4a" stroke-width="1.05"/></svg>
<div style="left:4px;top:153px;width:246px;height:1px;background:#dfdfdf;"></div>
<svg width="16" height="12" style="left:29px;top:155px"><path d="M1.5 0 V9.5 H15.5" fill="none" stroke="#6c6c6c" stroke-width="3"/></svg>
<svg width="13" height="13" style="left:49px;top:158px"><circle cx="6.5" cy="6.5" r="6" fill="#fff" stroke="#333" stroke-width="1"/><circle cx="6.5" cy="6.5" r="3.6" fill="#333"/></svg>
<div class="t" style="left:65.0px;top:159px;letter-spacing:0px;">A</div>
<div class="t" style="left:82.7px;top:158px;letter-spacing:-0.17px;">Function Reading</div>
<svg width="13" height="13" style="left:175px;top:158px"><circle cx="6.5" cy="6.5" r="6" fill="#fff" stroke="#333" stroke-width="1"/></svg>
<div class="t" style="left:191.7px;top:159px;letter-spacing:0px;">B</div>
<svg width="18" height="12" style="left:205px;top:155px"><path d="M0 9.5 H16.5 V0" fill="none" stroke="#6c6c6c" stroke-width="3"/></svg>
<div class="cb" style="left:11px;top:174px;width:114px;height:21px;"></div>
<div class="t" style="left:16.2px;top:179px;letter-spacing:-0.21px;">THD+N Ratio</div>
<svg width="9" height="5" viewBox="0 0 9 5" style="left:112px;top:183px"><path d="M0.5 0.5 L4.5 4.5 L8.5 0.5" fill="none" stroke="#4a4a4a" stroke-width="1.05"/></svg>
<div class="wb" style="left:130px;top:174px;width:112px;height:21px;"></div>
<div class="blk" style="left:133px;top:177px;width:89px;height:15px;"></div>
<div class="g" style="left:134.2px;top:179px;letter-spacing:-0.28px;">-114.474 dB</div>
<svg width="9" height="5" viewBox="0 0 9 5" style="left:229px;top:183px"><path d="M0.5 0.5 L4.5 4.5 L8.5 0.5" fill="none" stroke="#404040" stroke-width="1.05"/></svg>
<div class="chk" style="left:71px;top:199px;width:13px;height:13px;"></div>
<svg width="13" height="13" style="left:71px;top:199px"><path d="M2.2 5.8 L5 9.3 L11 2.6" fill="none" stroke="#3a3a3a" stroke-width="1.5"/></svg>
<div class="t" style="left:87.2px;top:200px;letter-spacing:-0.11px;">Auto Range</div>
<div class="cbd" style="left:152px;top:196px;width:90px;height:21px;"></div>
<div style="left:155px;top:199px;width:67px;height:15px;background:#ededed;"></div>
<svg width="9" height="5" viewBox="0 0 9 5" style="left:229px;top:205px"><path d="M0.5 0.5 L4.5 4.5 L8.5 0.5" fill="none" stroke="#c8c8c8" stroke-width="1.05"/></svg>
<div class="t" style="left:6.8px;top:227px;letter-spacing:-0.5px;">Det:</div>
<div class="cb" style="left:26px;top:222px;width:62px;height:21px;"></div>
<div style="left:26px;top:222px;width:42.2px;height:21px;overflow:hidden"><div class="t" style="left:4.2px;top:5px;letter-spacing:-0.24px;">Auto-Pre</div></div>
<svg width="9" height="5" viewBox="0 0 9 5" style="left:75px;top:231px"><path d="M0.5 0.5 L4.5 4.5 L8.5 0.5" fill="none" stroke="#4a4a4a" stroke-width="1.05"/></svg>
<div class="cb" style="left:88px;top:222px;width:72px;height:21px;"></div>
<div class="t" style="left:92.7px;top:227px;letter-spacing:-0.85px;">RMS</div>
<svg width="9" height="5" viewBox="0 0 9 5" style="left:147px;top:231px"><path d="M0.5 0.5 L4.5 4.5 L8.5 0.5" fill="none" stroke="#4a4a4a" stroke-width="1.05"/></svg>
<div class="t" style="left:167.7px;top:227px;letter-spacing:-0.24px;">BP/BR Fltr Freq</div>
<div class="t" style="left:5.8px;top:248px;letter-spacing:-0.75px;">BW:</div>
<div class="cb" style="left:26px;top:243px;width:62px;height:21px;"></div>
<div class="t" style="left:30.9px;top:248px;letter-spacing:-0.32px;">100 Hz</div>
<svg width="9" height="5" viewBox="0 0 9 5" style="left:75px;top:252px"><path d="M0.5 0.5 L4.5 4.5 L8.5 0.5" fill="none" stroke="#4a4a4a" stroke-width="1.05"/></svg>
<div class="cb" style="left:88px;top:243px;width:72px;height:21px;"></div>
<div class="t" style="left:92.7px;top:248px;letter-spacing:-0.1px;">22 kHz</div>
<svg width="9" height="5" viewBox="0 0 9 5" style="left:147px;top:252px"><path d="M0.5 0.5 L4.5 4.5 L8.5 0.5" fill="none" stroke="#4a4a4a" stroke-width="1.05"/></svg>
<div class="cb" style="left:164px;top:243px;width:92px;height:21px;"></div>
<div style="left:164px;top:243px;width:67.2px;height:21px;overflow:hidden"><div class="t" style="left:4.8px;top:5px;letter-spacing:-0.12px;">Counter Tune</div></div>
<svg width="9" height="5" viewBox="0 0 9 5" style="left:238px;top:252px"><path d="M0.5 0.5 L4.5 4.5 L8.5 0.5" fill="none" stroke="#4a4a4a" stroke-width="1.05"/></svg>
<div class="t" style="left:10.0px;top:269px;letter-spacing:-0.92px;">Fltr:</div>
<div class="cb" style="left:26px;top:264px;width:134px;height:21px;"></div>
<div class="t" style="left:30.9px;top:269px;letter-spacing:-0.17px;">None</div>
<svg width="9" height="5" viewBox="0 0 9 5" style="left:147px;top:273px"><path d="M0.5 0.5 L4.5 4.5 L8.5 0.5" fill="none" stroke="#4a4a4a" stroke-width="1.05"/></svg>
<div class="cbd" style="left:164px;top:264px;width:92px;height:21px;"></div>
<div style="left:167px;top:267px;width:65px;height:15px;background:#ededed;"></div>
<svg width="9" height="5" viewBox="0 0 9 5" style="left:238px;top:273px"><path d="M0.5 0.5 L4.5 4.5 L8.5 0.5" fill="none" stroke="#c8c8c8" stroke-width="1.05"/></svg>
<div style="left:4px;top:285px;width:246px;height:1px;background:#dfdfdf;"></div>
<div class="t" style="left:5.9px;top:289px;letter-spacing:-0.3px;">References</div>
<div class="t" style="left:141.0px;top:294px;letter-spacing:-1.0px;">Freq:</div>
<div class="wb" style="left:166px;top:290px;width:82px;height:21px;"></div>
<div class="t" style="left:170.2px;top:294px;letter-spacing:-0.2px;">1.00000 kHz</div>
<div class="t" style="left:18.0px;top:315px;letter-spacing:-0.56px;">dBr A:</div>
<div class="wb" style="left:47px;top:311px;width:83px;height:21px;"></div>
<svg width="9" height="5" viewBox="0 0 9 5" style="left:117px;top:320px"><path d="M0.5 0.5 L4.5 4.5 L8.5 0.5" fill="none" stroke="#4a4a4a" stroke-width="1.05"/></svg>
<div class="t" style="left:50.8px;top:315px;letter-spacing:-0.45px;">387.3</div>
<div class="t" style="left:86.8px;top:315px;letter-spacing:-2.6px;">mV</div>
<div class="t" style="left:133.4px;top:315px;letter-spacing:-0.28px;">Watts:</div>
<div class="wb" style="left:166px;top:311px;width:82px;height:21px;"></div>
<div class="t" style="left:170.2px;top:315px;letter-spacing:-0.5px;">8.000</div>
<div class="t" style="left:209.0px;top:315px;letter-spacing:-1.33px;">Ohms</div>
<div class="t" style="left:18.0px;top:336px;letter-spacing:-0.76px;">dBr B:</div>
<div class="wb" style="left:47px;top:332px;width:83px;height:21px;"></div>
<svg width="9" height="5" viewBox="0 0 9 5" style="left:117px;top:341px"><path d="M0.5 0.5 L4.5 4.5 L8.5 0.5" fill="none" stroke="#4a4a4a" stroke-width="1.05"/></svg>
<div class="t" style="left:50.8px;top:336px;letter-spacing:-0.45px;">387.3</div>
<div class="t" style="left:86.8px;top:336px;letter-spacing:-2.6px;">mV</div>
<div class="t" style="left:141.0px;top:336px;letter-spacing:-1.33px;">dBm:</div>
<div class="wb" style="left:166px;top:332px;width:82px;height:21px;"></div>
<div class="t" style="left:170.2px;top:336px;letter-spacing:-0.5px;">600.0</div>
<div class="t" style="left:209.0px;top:336px;letter-spacing:-1.33px;">Ohms</div>
</div></div>
</body></html>
